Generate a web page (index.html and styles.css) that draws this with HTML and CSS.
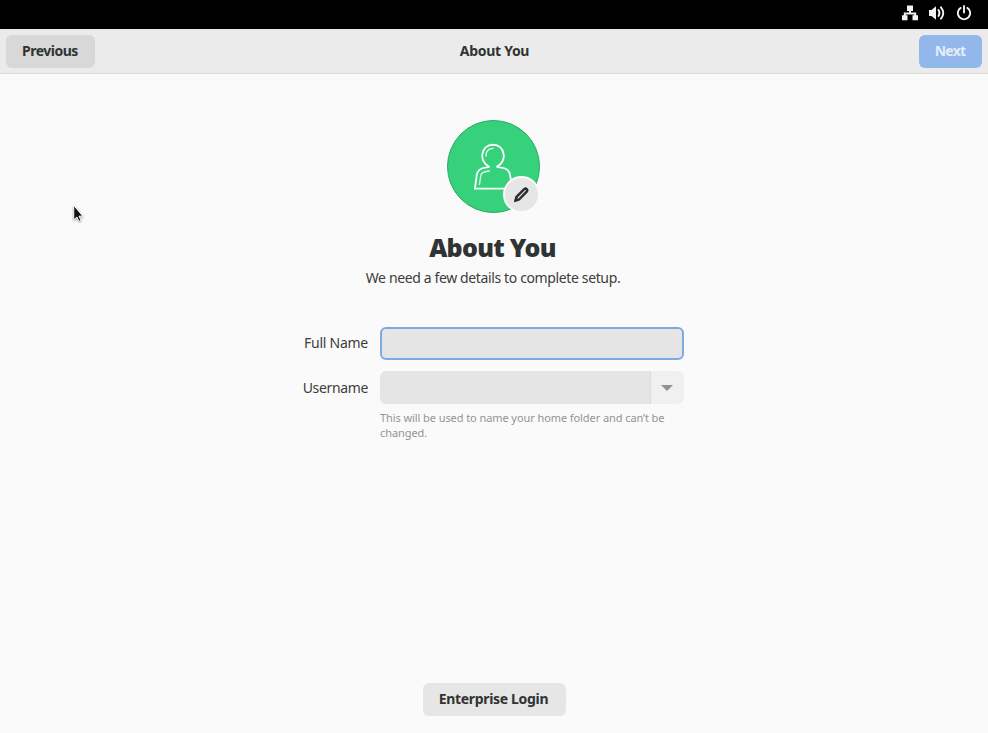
FILE: index.html
```html
<!DOCTYPE html>
<html lang="en">
<head>
<meta charset="utf-8">
<title>About You</title>
<link rel="stylesheet" href="styles.css">
</head>
<body>
<div class="topbar">
  <svg class="status" viewBox="0 0 16 16" aria-hidden="true"><path d="M5 .6h6v5.400H9v1.600h5.200v2.700H16v5h-5.500v-5h1.700V9.400H3.800v.9h1.700v5H0v-5h1.800V7.600H7V6H5z"/></svg>
  <svg class="status" viewBox="0 0 16 16" aria-hidden="true"><path d="M0 5h2.500L7 1.200v13.600L2.500 11H0z"/><path class="line" d="M9.500 5q2 3 0 6"/><path class="line" d="M12 2.300q4.500 5.700 0 11.400"/></svg>
  <svg class="status" viewBox="0 0 16 16" aria-hidden="true"><path class="line" d="M8 1v6.500M4.700 2.900a6.200 6.200 0 1 0 6.600 0"/></svg>
</div>
<header class="header">
  <button class="button previous">Previous</button>
  <h1 class="title">About You</h1>
  <button class="button next">Next</button>
</header>
<main class="page">
  <div class="avatar">
    <svg class="person" viewBox="0 0 92 92" aria-hidden="true">
      <path class="body" d="M41 45.700C31 41 33 24 45.500 24s14.500 17 4.500 21.700c-1 .6 0 1.100 2 1.300 8 .8 10 3 10.800 8L65 68.300H27.200L29 55c.8-5 3-7.200 10-8 2-.2 3-.7 2-1.300z"/>
      <path class="shine" d="M38.500 36c-.5-5 2-8.500 7.500-8.500M31.700 64.500l1.600-10c.5-2.500 2.700-3.500 9-4"/>
    </svg>
    <span class="edit"><svg viewBox="0 0 16 16" aria-hidden="true"><path class="pencil" d="M2.700 13.400l.8-3.500 7.700-7.700q1.400-1.200 2.500-.1t0 2.600l-7.600 7.800z"/><path class="tip" d="M1.200 14.800l1-5 4 4z"/></svg></span>
  </div>
  <h2 class="heading">About You</h2>
  <p class="subtitle">We need a few details to complete setup.</p>
  <form class="form">
    <label class="label full" for="name">Full Name</label>
    <input class="field focused" id="name">
    <label class="label user" for="user">Username</label>
    <div class="combo"><input class="field" id="user"><span class="drop"><i class="arrow"></i></span></div>
    <p class="hint">This will be used to name your home folder and can’t be changed.</p>
  </form>
  <button class="button enterprise">Enterprise Login</button>
</main>
<svg class="cursor" viewBox="0 0 14 20" aria-hidden="true"><path d="M1.500 1.500v15.200l3.300-3 2.200 4.600 2.200-1-2.200-4.500h4z"/></svg>
</body>
</html>
```
FILE: styles.css
```css
* { box-sizing: border-box; }
body {
  margin: 0;
  height: 733px;
  display: flex;
  flex-direction: column;
  overflow: hidden;
  background: #fafafa;
  color: #3a3d3d;
  font: 14px/20px "Noto Sans", sans-serif;
}
h1, h2, p { margin: 0; }
svg { display: block; }
.topbar {
  height: 29px;
  flex: none;
  display: flex;
  justify-content: flex-end;
  gap: 11px;
  padding: 5px 16px 0 0;
  background: #000;
}
.status { width: 16px; height: 16px; fill: #f2f2f2; }
.line { fill: none; stroke: #f2f2f2; stroke-width: 1.900; stroke-linecap: round; }
.header {
  height: 45px;
  flex: none;
  display: grid;
  grid-template-columns: 1fr auto 1fr;
  align-items: center;
  padding: 0 6px;
  background: #ebebeb;
  border-bottom: 1px solid #dadada;
}
.title { padding-left: 1px; font-size: 14px; line-height: 20px; font-weight: 700; letter-spacing: -.3px; color: #303333; }
.button {
  height: 33px;
  padding: 0;
  border: 0;
  border-radius: 6px;
  background: #e6e6e6;
  color: #303333;
  font: 700 14px/20px "Noto Sans", sans-serif;
}
.previous { width: 89px; padding: 0 1px 1px 0; background: #d8d8d8; letter-spacing: -.5px; }
.next { width: 63px; padding: 0 1px 1px 0; justify-self: end; background: #92b7ea; color: #e4edf9; letter-spacing: -.8px; }
.page {
  flex: 1;
  display: flex;
  flex-direction: column;
  align-items: center;
  padding-bottom: 17px;
}
.avatar {
  position: relative;
  width: 93px;
  height: 93px;
  margin: 46px 2px 0 0;
  border: 1px solid #2da663;
  border-radius: 50%;
  background: #35d27b;
}
.person { width: 91px; height: 91px; }
.body, .shine { fill: none; stroke: #fff; stroke-width: 1.800; }
.shine { stroke: #d8f6e5; stroke-width: 1.400; }
.edit {
  position: absolute;
  left: 55px;
  top: 55px;
  width: 37px;
  height: 37px;
  padding: 9px 8px;
  border: 2px solid #fafafa;
  border-radius: 50%;
  background: #e6e6e6;
}
.edit svg { width: 16px; height: 16px; }
.pencil { fill: none; stroke: #2e2e2e; stroke-width: 2.500; }
.tip { fill: #2e2e2e; }
.heading { margin: 17px 3px 0 0; font-size: 25px; line-height: 34px; font-weight: 900; letter-spacing: -.7px; color: #303333; }
.subtitle { margin: 4px 2px 0 0; letter-spacing: -.37px; }
.form {
  width: 382px;
  margin: 39px 0 0 -2px;
  display: grid;
  grid-template-columns: 67px 304px;
  grid-template-rows: 33px 33px auto;
  column-gap: 11px;
  row-gap: 11px;
  align-items: center;
}
.label { justify-self: end; padding-right: 1px; white-space: nowrap; }
.full { padding-bottom: 1px; letter-spacing: -.25px; }
.user { letter-spacing: -.35px; }
.field {
  width: 100%;
  height: 33px;
  border: 0;
  border-radius: 5px;
  background: #e5e5e5;
  outline: 0;
}
.focused { border: 2px solid #7eaae2; border-radius: 6px; }
.combo { display: flex; height: 33px; border-radius: 6px; overflow: hidden; }
.combo .field { flex: 1; min-width: 0; border-radius: 0; }
.drop {
  width: 34px;
  padding-right: 1px;
  display: flex;
  align-items: center;
  justify-content: center;
  background: #f0f0f0;
  border-left: 1px solid #dcdcdc;
}
.arrow { border: 6px solid transparent; border-top-color: #929292; border-bottom: 0; }
.hint {
  grid-column: 2;
  margin-top: -4px;
  font-size: 11px;
  line-height: 14.500px;
  letter-spacing: -.08px;
  color: #929595;
}
.enterprise { width: 143px; margin: auto 0 0; padding: 0 1px 1px 0; letter-spacing: -.33px; }
.cursor { position: absolute; left: 72px; top: 204px; width: 14px; height: 19px; }
.cursor path { fill: #111; stroke: #fff; stroke-width: 1; filter: drop-shadow(0 1px 1px #0005); }
```
